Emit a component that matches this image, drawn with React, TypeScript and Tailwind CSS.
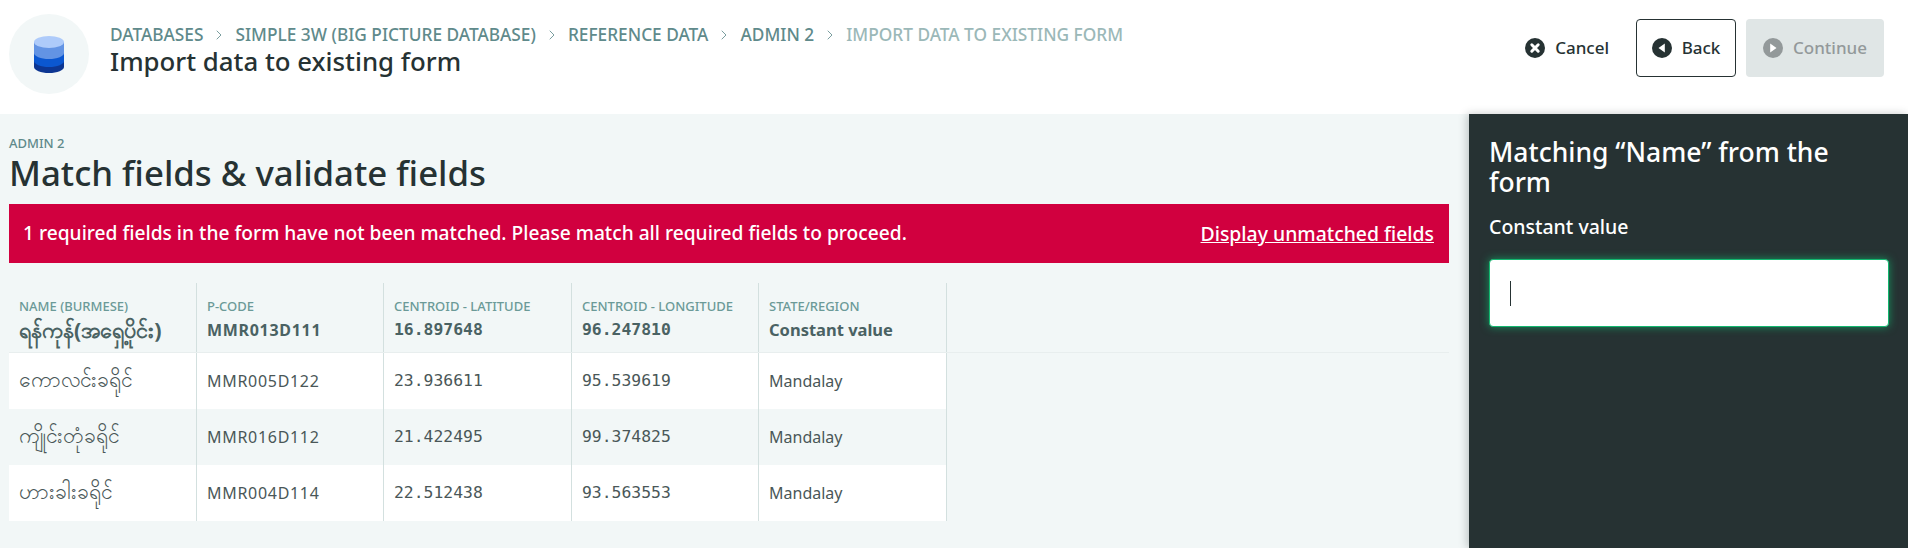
import { ChevronRight } from 'lucide-react';

const CRUMBS = ["DATABASES", "SIMPLE 3W (BIG PICTURE DATABASE)", "REFERENCE DATA", "ADMIN 2"];

const NUM_FONT = "font-['DejaVu_Sans_Mono',monospace] text-[16.4px]";
const CODE_FONT = "text-[16px] tracking-[0.7px]";

const COLUMNS = [
  { label: "NAME (BURMESE)", sample: "ရန်ကုန်(အရှေ့ပိုင်း)", width: "w-[188px]", font: "text-[21.5px]", cell: "text-[21px] pb-[3px]" },
  { label: "P-CODE", sample: "MMR013D111", width: "w-[187px]", font: CODE_FONT, cell: CODE_FONT },
  { label: "CENTROID - LATITUDE", sample: "16.897648", width: "w-[188px]", font: NUM_FONT, cell: NUM_FONT },
  { label: "CENTROID - LONGITUDE", sample: "96.247810", width: "w-[187px]", font: NUM_FONT, cell: NUM_FONT },
  { label: "STATE/REGION", sample: "Constant value", width: "w-[188px]", font: "text-[16.5px]", cell: "text-[16px]" },
];

const ROWS = [
  ["ကောလင်းခရိုင်", "MMR005D122", "23.936611", "95.539619", "Mandalay"],
  ["ကျိုင်းတုံခရိုင်", "MMR016D112", "21.422495", "99.374825", "Mandalay"],
  ["ဟားခါးခရိုင်", "MMR004D114", "22.512438", "93.563553", "Mandalay"],
];

function CircleIcon({ kind, color }: { kind: "x" | "left" | "right"; color: string }) {
  return (
    <svg width="20" height="20" viewBox="0 0 20 20" className="shrink-0">
      <circle cx="10" cy="10" r="10" fill={color} />
      {kind === "x" && <path d="M6.800 6.800l6.400 6.400M13.200 6.800l-6.400 6.400" stroke="#fff" strokeWidth="3" strokeLinecap="round" />}
      {kind === "left" && <path d="M12.800 5.500v9L6.500 10z" fill="#fff" />}
      {kind === "right" && <path d="M7.200 5.500v9l6.300-4.500z" fill="#fff" />}
    </svg>
  );
}

function DatabaseIcon() {
  return (
    <svg width="30" height="37" viewBox="0 0 30 37">
      <path d="M0 24v7c0 3.300 6.700 6 15 6s15-2.700 15-6v-7z" fill="#0d3692" />
      <path d="M0 14v11c0 3.300 6.700 6 15 6s15-2.700 15-6V14z" fill="#0b57d0" />
      <path d="M0 6v11c0 3.300 6.700 6 15 6s15-2.700 15-6V6z" fill="#6394e4" />
      <ellipse cx="15" cy="6" rx="15" ry="6" fill="#aecbfa" />
    </svg>
  );
}

export default function App() {
  return (
    <div className="flex h-[548px] w-[1908px] flex-col overflow-hidden bg-white font-['Noto_Sans','Liberation_Sans',sans-serif] text-[#263233]">
      <header className="flex h-[114px] shrink-0 items-start pl-[9px] pr-6 pt-[14px]">
        <div className="flex size-[80px] items-center justify-center rounded-full bg-[#f2f7f7]">
          <DatabaseIcon />
        </div>
        <div className="ml-[21px] flex-1 pt-[10px]">
          <nav className="flex items-center text-[17.300px] font-medium leading-[22px] text-[#5f8a8b]">
            {CRUMBS.map((c) => (
              <span key={c} className="flex items-center">
                {c}
                <ChevronRight size={16} strokeWidth={1.25} className="mx-[8px]" />
              </span>
            ))}
            <span className="text-[#9bb8b8]">IMPORT DATA TO EXISTING FORM</span>
          </nav>
          <h1 className="-mt-px text-[25.800px] font-medium leading-[32px]">Import data to existing form</h1>
        </div>
        <div className="mt-[5px] flex items-center gap-[10px]">
          <button className="mr-[17px] flex h-[58px] items-center gap-[10px] text-[17px] font-medium">
            <CircleIcon kind="x" color="#263233" /> Cancel
          </button>
          <button className="flex h-[58px] w-[100px] items-center justify-center gap-[10px] rounded-[4px] border border-[#263233] text-[17px] font-medium">
            <CircleIcon kind="left" color="#263233" /> Back
          </button>
          <button className="flex h-[58px] w-[138px] items-center justify-center gap-[10px] rounded-[4px] bg-[#e0e6e6] text-[17px] font-medium text-[#93999a]">
            <CircleIcon kind="right" color="#93999a" /> Continue
          </button>
        </div>
      </header>

      <div className="flex min-h-0 flex-1">
        <main className="min-w-0 flex-1 bg-[#f2f7f7] pl-[9px] pr-5 pt-[21px]">
          <div className="text-[13px] font-medium leading-[16px] text-[#5f8a8b]">ADMIN 2</div>
          <h2 className="mt-[2px] text-[34.800px] font-medium leading-[40px]">Match fields &amp; validate fields</h2>
          <div className="mt-[11px] flex h-[59px] items-center justify-between bg-[#d1003f] pl-[14px] pr-[15px] text-[19.200px] font-medium text-white">
            <span>1 required fields in the form have not been matched. Please match all required fields to proceed.</span>
            <a className="text-[19.400px] underline">Display unmatched fields</a>
          </div>

          <div className="mt-5 flex h-[70px] border-b border-[#e8eeee]">
            {COLUMNS.map((col) => (
              <div key={col.label} className={`${col.width} border-r border-[#d3e0df] px-[10px] pt-[15px]`}>
                <div className="text-[13px] font-medium leading-[16px] text-[#6b9a97]">{col.label}</div>
                <div className={`mt-[2px] whitespace-nowrap font-bold leading-[28px] text-[#4a6263] ${col.font}`}>
                  {col.sample}
                </div>
              </div>
            ))}
          </div>
          {ROWS.map((row, i) => (
            <div key={row[1]} className={`flex h-[56px] w-[938px] ${i === 1 ? "bg-[#f2f7f7]" : "bg-white"}`}>
              {row.map((cell, j) => (
                <div
                  key={cell + j}
                  className={`${COLUMNS[j].width} flex items-center whitespace-nowrap border-r border-[#d3e0df] px-[10px] text-[#4a5758] ${COLUMNS[j].cell}`}
                >
                  {cell}
                </div>
              ))}
            </div>
          ))}
        </main>

        <aside className="w-[439px] shrink-0 bg-[#263233] px-5 pt-[23px] shadow-[-2px_0_8px_rgba(38,50,51,0.25)]">
          <h3 className="text-[26.500px] font-medium leading-[30px] text-white">Matching “Name” from the form</h3>
          <div className="mt-[18px] text-[19.500px] font-medium leading-[24px] text-white">Constant value</div>
          <div className="mt-[20px] flex h-[68px] w-[400px] items-center rounded-[4px] border border-[#12b76f] bg-white pl-[20px] shadow-[0_0_8px_rgba(18,183,111,0.7)]">
            <span className="h-[25px] w-px bg-[#263233]" />
          </div>
        </aside>
      </div>
    </div>
  );
}
